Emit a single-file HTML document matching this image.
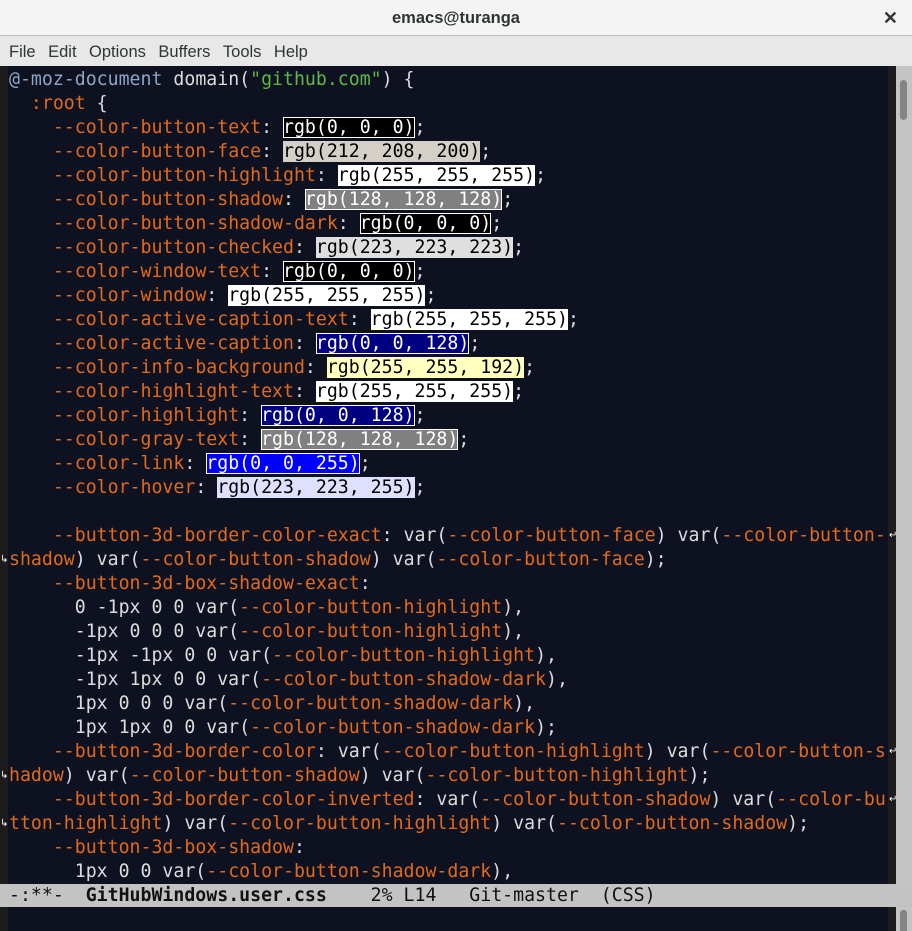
<!DOCTYPE html>
<html><head><meta charset="utf-8"><style>
*{margin:0;padding:0;box-sizing:border-box}
body{width:912px;height:931px;overflow:hidden;background:#0e1120;position:relative;font-family:"Liberation Sans",sans-serif}
#title{position:absolute;left:0;top:0;width:912px;height:36px;background:#f4f4f4;border-bottom:1px solid #bdbdbd;text-align:center;font-weight:bold;font-size:16.5px;line-height:36px;color:#2e3436}
#close{position:absolute;right:14px;top:0;font-weight:bold;font-size:18px;color:#333}
#menu{position:absolute;left:0;top:36px;width:912px;height:30px;background:#e8e8e8;font-size:16.5px;line-height:32px;color:#2e3436;padding-left:9px}
#menu span{margin-right:12.5px}
#lf{position:absolute;left:0;top:66px;width:8px;height:865px;background:#1c1c1c}
#rf{position:absolute;left:888px;top:66px;width:8px;height:865px;background:#1c1c1c}
#sb{position:absolute;left:896px;top:66px;width:16px;height:818px;background:#c4c4c4}
#thumb{position:absolute;left:900px;top:80px;width:7px;height:40px;background:#858585;border-radius:4px}
#thumb2{position:absolute;left:900px;top:910px;width:7px;height:21px;background:#858585;border-radius:3px 3px 0 0}
#sb2{position:absolute;left:896px;top:907px;width:16px;height:24px;background:#c4c4c4}
#code{position:absolute;left:9px;top:68px;font-family:"DejaVu Sans Mono","Liberation Mono",monospace;font-size:18.22px;color:#dcdcdc}
.l{height:24px;line-height:24px;white-space:pre}
.o{color:#e26a1c}.k{color:#8ea6c6}.g{color:#5fb84a}
.d{background:#000;color:#fff;box-shadow:inset 0 0 0 1px #fff}
#ml{position:absolute;left:0;top:884px;width:912px;height:23px;background:#c3c3c3;font-family:"DejaVu Sans Mono","Liberation Mono",monospace;font-size:18.22px;line-height:23px;color:#111;white-space:pre;padding-left:9px}
.ar{position:absolute;color:#fff;font-size:10px;font-family:"DejaVu Sans",sans-serif}
</style></head><body>
<div id="title">emacs@turanga<span id="close">✕</span></div>
<div id="menu"><span>File</span><span>Edit</span><span>Options</span><span>Buffers</span><span>Tools</span><span>Help</span></div>
<div id="lf"></div><div id="rf"></div><div id="sb"></div><div id="thumb"></div><div id="sb2"></div><div id="thumb2"></div>
<div id="code"><div class="l"><span class="k">@-moz-document</span> domain(<span class="g">"github.com"</span>) {</div><div class="l">  <span class="o">:root</span> {</div><div class="l">    <span class="o">--color-button-text</span>: <span class="d">rgb(0, 0, 0)</span>;</div><div class="l">    <span class="o">--color-button-face</span>: <span style="background:#d4d0c8;color:#000">rgb(212, 208, 200)</span>;</div><div class="l">    <span class="o">--color-button-highlight</span>: <span style="background:#fff;color:#000">rgb(255, 255, 255)</span>;</div><div class="l">    <span class="o">--color-button-shadow</span>: <span class="d" style="background:#808080">rgb(128, 128, 128)</span>;</div><div class="l">    <span class="o">--color-button-shadow-dark</span>: <span class="d">rgb(0, 0, 0)</span>;</div><div class="l">    <span class="o">--color-button-checked</span>: <span style="background:#dfdfdf;color:#000">rgb(223, 223, 223)</span>;</div><div class="l">    <span class="o">--color-window-text</span>: <span class="d">rgb(0, 0, 0)</span>;</div><div class="l">    <span class="o">--color-window</span>: <span style="background:#fff;color:#000">rgb(255, 255, 255)</span>;</div><div class="l">    <span class="o">--color-active-caption-text</span>: <span style="background:#fff;color:#000">rgb(255, 255, 255)</span>;</div><div class="l">    <span class="o">--color-active-caption</span>: <span class="d" style="background:#000080">rgb(0, 0, 128)</span>;</div><div class="l">    <span class="o">--color-info-background</span>: <span style="background:#ffffc0;color:#000">rgb(255, 255, 192)</span>;</div><div class="l">    <span class="o">--color-highlight-text</span>: <span style="background:#fff;color:#000">rgb(255, 255, 255)</span>;</div><div class="l">    <span class="o">--color-highlight</span>: <span class="d" style="background:#000080">rgb(0, 0, 128)</span>;</div><div class="l">    <span class="o">--color-gray-text</span>: <span class="d" style="background:#808080">rgb(128, 128, 128)</span>;</div><div class="l">    <span class="o">--color-link</span>: <span class="d" style="background:#0000ff">rgb(0, 0, 255)</span>;</div><div class="l">    <span class="o">--color-hover</span>: <span style="background:#dfdfff;color:#000">rgb(223, 223, 255)</span>;</div><div class="l"> </div><div class="l">    <span class="o">--button-3d-border-color-exact</span>: var(<span class="o">--color-button-face</span>) var(<span class="o">--color-button-</span></div><div class="l"><span class="o">shadow</span>) var(<span class="o">--color-button-shadow</span>) var(<span class="o">--color-button-face</span>);</div><div class="l">    <span class="o">--button-3d-box-shadow-exact</span>:</div><div class="l">      0 -1px 0 0 var(<span class="o">--color-button-highlight</span>),</div><div class="l">      -1px 0 0 0 var(<span class="o">--color-button-highlight</span>),</div><div class="l">      -1px -1px 0 0 var(<span class="o">--color-button-highlight</span>),</div><div class="l">      -1px 1px 0 0 var(<span class="o">--color-button-shadow-dark</span>),</div><div class="l">      1px 0 0 0 var(<span class="o">--color-button-shadow-dark</span>),</div><div class="l">      1px 1px 0 0 var(<span class="o">--color-button-shadow-dark</span>);</div><div class="l">    <span class="o">--button-3d-border-color</span>: var(<span class="o">--color-button-highlight</span>) var(<span class="o">--color-button-s</span></div><div class="l"><span class="o">hadow</span>) var(<span class="o">--color-button-shadow</span>) var(<span class="o">--color-button-highlight</span>);</div><div class="l">    <span class="o">--button-3d-border-color-inverted</span>: var(<span class="o">--color-button-shadow</span>) var(<span class="o">--color-bu</span></div><div class="l"><span class="o">tton-highlight</span>) var(<span class="o">--color-button-highlight</span>) var(<span class="o">--color-button-shadow</span>);</div><div class="l">    <span class="o">--button-3d-box-shadow</span>:</div><div class="l">      1px 0 0 var(<span class="o">--color-button-shadow-dark</span>),</div></div>
<div class="ar" style="left:889px;top:530px">↵</div><div class="ar" style="left:0px;top:554px">↳</div>
<div class="ar" style="left:889px;top:746px">↵</div><div class="ar" style="left:0px;top:770px">↳</div>
<div class="ar" style="left:889px;top:794px">↵</div><div class="ar" style="left:0px;top:818px">↳</div>
<div id="ml">-:**-  <b>GitHubWindows.user.css</b>    2% L14   Git-master  (CSS)</div>
</body></html>
